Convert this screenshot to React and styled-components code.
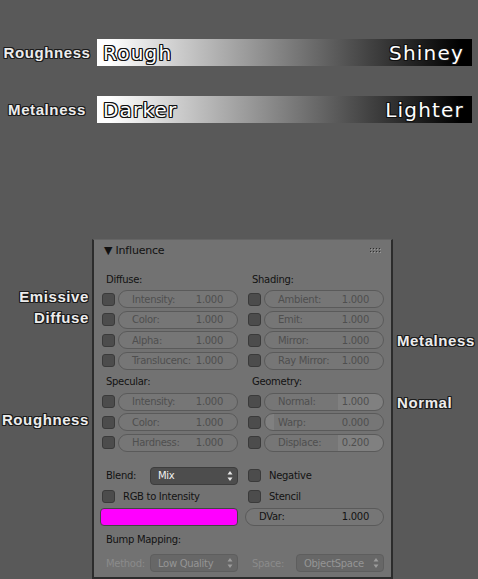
import styled, { createGlobalStyle } from 'styled-components';

const GlobalStyle = createGlobalStyle`
  html, body {
    margin: 0;
    background: #595959;
  }
  body {
    font-family: "DejaVu Sans", sans-serif;
  }
`;

const halo = (c) =>
  `-1px -1px 0 ${c}, 1px -1px 0 ${c}, -1px 1px 0 ${c}, 1px 1px 0 ${c}, 0 1px 0 ${c}, 0 -1px 0 ${c}, 1px 0 0 ${c}, -1px 0 0 ${c}`;

const Page = styled.div`
  width: 478px;
  height: 579px;
  overflow: hidden;
`;

const Scales = styled.div`
  display: flex;
  flex-direction: column;
  gap: 30px;
  padding-top: 39px;
`;

const ScaleRow = styled.div`
  display: grid;
  grid-template-columns: 97px 375px;
  align-items: center;
  height: 27px;
`;

const Callout = styled.div`
  font-family: "Liberation Sans", Arial, sans-serif;
  font-weight: bold;
  font-size: 15px;
  letter-spacing: 0.6px;
  line-height: 20px;
  color: #ececec;
  text-shadow: ${halo('#1c1c1c')};
  white-space: nowrap;
`;

const ScaleLabel = styled(Callout)`
  text-align: center;
  padding-right: 3px;
`;

const ScaleBar = styled.div`
  height: 27px;
  background: linear-gradient(to right, #ffffff 3%, #000000 97%);
  display: flex;
  justify-content: space-between;
  align-items: center;
  padding: 0 8px 0 6px;
  font-family: "DejaVu Sans", sans-serif;
  font-size: 20px;
  letter-spacing: 1.2px;
  color: #ffffff;
  text-shadow: ${halo('#111')};
`;

const Stage = styled.div`
  display: flex;
  align-items: flex-start;
  margin-top: 116px;
`;

const Notes = styled.div`
  width: ${(p) => p.$width}px;
  box-sizing: border-box;
  display: flex;
  flex-direction: column;
  align-items: ${(p) => (p.$right ? 'flex-end' : 'flex-start')};
  padding: ${(p) => (p.$right ? '0 3px 0 0' : '0 0 0 4px')};
`;

const Note = styled(Callout)`
  margin-top: ${(p) => p.$top || 0}px;
`;

const Panel = styled.div`
  width: 301px;
  box-sizing: border-box;
  background: #727272;
  border: 2px solid #2c2c2c;
  border-top: 1px solid #646464;
  color: #121212;
  font-size: 10px;
  letter-spacing: -0.3px;
`;

const Header = styled.div`
  height: 21px;
  display: flex;
  align-items: center;
  justify-content: space-between;
  padding: 0 10px;
  font-size: 11px;
  letter-spacing: -0.2px;
  color: #111;
`;

const Body = styled.div`
  padding: 8px 7px 2px 8px;
`;

const Grid = styled.div`
  display: grid;
  grid-template-columns: 136px 136px;
  column-gap: 10px;
  grid-template-rows: ${(p) => p.$rows};
  align-items: center;
  margin-top: ${(p) => p.$top || 0}px;
`;

const GroupLabel = styled.div`
  padding-left: 4px;
  color: ${(p) => (p.$muted ? '#8b8b8b' : '#121212')};
`;

const FieldRow = styled.div`
  display: flex;
  align-items: center;
  gap: ${(p) => p.$gap || 3}px;
`;

const Check = styled.span`
  width: 13px;
  height: 13px;
  flex: none;
  box-sizing: border-box;
  border-radius: 3px;
  background: #4c4c4c;
  border: 1px solid #3a3a3a;
`;

const Slider = styled.div`
  flex: 1;
  height: 18px;
  box-sizing: border-box;
  margin-left: ${(p) => p.$shift || 0}px;
  border: 1px solid #5a5a5a;
  border-radius: 9px;
  background: ${(p) =>
    p.$light
      ? `linear-gradient(to right, #767676 ${p.$light[0]}%, #808080 ${p.$light[0]}%, #808080 ${p.$light[1]}%, #767676 ${p.$light[1]}%)`
      : '#767676'};
  display: flex;
  justify-content: space-between;
  align-items: center;
  padding: 0 14px 0 13px;
  color: ${(p) => (p.$live ? '#131313' : '#4f4f4f')};
  white-space: nowrap;
`;

const Select = styled.div`
  width: 88px;
  height: 18px;
  box-sizing: border-box;
  border-radius: 4px;
  background: ${(p) => (p.$muted ? '#676767' : '#4d4d4d')};
  border: 1px solid ${(p) => (p.$muted ? '#5e5e5e' : '#3d3d3d')};
  color: ${(p) => (p.$muted ? '#959595' : '#f0f0f0')};
  display: flex;
  align-items: center;
  justify-content: space-between;
  padding: 0 4px 0 7px;
`;

const LabeledSelect = styled.div`
  display: flex;
  align-items: center;
  justify-content: space-between;
  padding-left: 4px;
  color: ${(p) => (p.$muted ? '#8b8b8b' : '#121212')};
`;

const Swatch = styled.div`
  height: 18px;
  box-sizing: border-box;
  margin-left: -2px;
  background: #ff00ff;
  border: 1px solid #444;
  border-radius: 4px;
`;

function Grip() {
  const dots = [];
  for (let r = 0; r < 2; r++) {
    for (let c = 0; c < 4; c++) {
      dots.push(<rect key={`d${r}${c}`} x={c * 3} y={r * 3} width="1" height="1" fill="#2e2e2e" />);
      dots.push(<rect key={`l${r}${c}`} x={c * 3 + 1} y={r * 3 + 1} width="1" height="1" fill="#9a9a9a" />);
    }
  }
  return (
    <svg width="11" height="5" viewBox="0 0 11 5">
      {dots}
    </svg>
  );
}

function Arrows({ color }) {
  return (
    <svg width="6" height="12" viewBox="0 0 6 12">
      <path d="M3 1 L5.5 4.5 L0.5 4.5 Z" fill={color} />
      <path d="M3 11 L5.5 7.5 L0.5 7.5 Z" fill={color} />
    </svg>
  );
}

function Field({ label, value, live, light, shift }) {
  return (
    <FieldRow>
      <Check />
      <Slider $live={live} $light={light} $shift={shift}>
        <span>{label}</span>
        <span>{value}</span>
      </Slider>
    </FieldRow>
  );
}

function Toggle({ label }) {
  return (
    <FieldRow $gap={8}>
      <Check />
      <span>{label}</span>
    </FieldRow>
  );
}

export default function App() {
  return (
    <Page>
      <GlobalStyle />
      <Scales>
        <ScaleRow>
          <ScaleLabel>Roughness</ScaleLabel>
          <ScaleBar>
            <span>Rough</span>
            <span>Shiney</span>
          </ScaleBar>
        </ScaleRow>
        <ScaleRow>
          <ScaleLabel>Metalness</ScaleLabel>
          <ScaleBar>
            <span>Darker</span>
            <span>Lighter</span>
          </ScaleBar>
        </ScaleRow>
      </Scales>

      <Stage>
        <Notes $width={92} $right>
          <Note $top={48}>Emissive</Note>
          <Note $top={1}>Diffuse</Note>
          <Note $top={82}>Roughness</Note>
        </Notes>

        <Panel>
          <Header>
            <span>▼ Influence</span>
            <Grip />
          </Header>
          <Body>
            <Grid $rows="20px repeat(8, 20.5px)">
              <GroupLabel>Diffuse:</GroupLabel>
              <GroupLabel>Shading:</GroupLabel>
              <Field label="Intensity:" value="1.000" />
              <Field label="Ambient:" value="1.000" />
              <Field label="Color:" value="1.000" />
              <Field label="Emit:" value="1.000" />
              <Field label="Alpha:" value="1.000" />
              <Field label="Mirror:" value="1.000" />
              <Field label="Translucenc:" value="1.000" />
              <Field label="Ray Mirror:" value="1.000" />
              <GroupLabel>Specular:</GroupLabel>
              <GroupLabel>Geometry:</GroupLabel>
              <Field label="Intensity:" value="1.000" />
              <Field label="Normal:" value="1.000" light={[62, 100]} />
              <Field label="Color:" value="1.000" />
              <Field label="Warp:" value="0.000" light={[1, 8]} />
              <Field label="Hardness:" value="1.000" />
              <Field label="Displace:" value="0.200" light={[62, 100]} />
            </Grid>

            <Grid $rows="repeat(3, 20.5px) 24px 24px" $top={12.5}>
              <LabeledSelect>
                <span>Blend:</span>
                <Select>
                  <span>Mix</span>
                  <Arrows color="#e8e8e8" />
                </Select>
              </LabeledSelect>
              <Toggle label="Negative" />
              <Toggle label="RGB to Intensity" />
              <Toggle label="Stencil" />
              <Swatch />
              <Slider $live $shift={-3}>
                <span>DVar:</span>
                <span>1.000</span>
              </Slider>
              <GroupLabel>Bump Mapping:</GroupLabel>
              <span />
              <LabeledSelect $muted>
                <span>Method:</span>
                <Select $muted>
                  <span>Low Quality</span>
                  <Arrows color="#9c9c9c" />
                </Select>
              </LabeledSelect>
              <LabeledSelect $muted>
                <span>Space:</span>
                <Select $muted>
                  <span>ObjectSpace</span>
                  <Arrows color="#9c9c9c" />
                </Select>
              </LabeledSelect>
            </Grid>
          </Body>
        </Panel>

        <Notes $width={85}>
          <Note $top={92}>Metalness</Note>
          <Note $top={42}>Normal</Note>
        </Notes>
      </Stage>
    </Page>
  );
}
